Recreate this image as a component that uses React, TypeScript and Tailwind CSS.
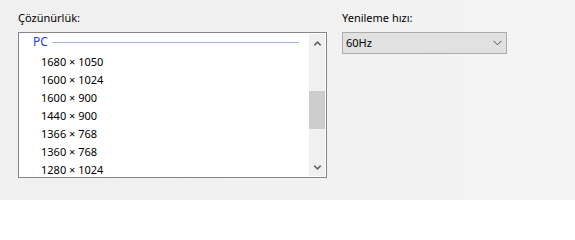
const resolutions = [
  "1680 × 1050",
  "1600 × 1024",
  "1600 × 900",
  "1440 × 900",
  "1366 × 768",
  "1360 × 768",
  "1280 × 1024",
];

function ArrowUp() {
  return (
    <svg width="9" height="6" viewBox="0 0 9 6" aria-hidden="true">
      <path d="M0.5 5 L4.5 1 L8.5 5 L7 5.8 L4.5 3.3 L2 5.8 Z" fill="#606060" />
    </svg>
  );
}

function ArrowDown() {
  return (
    <svg width="9" height="6" viewBox="0 0 9 6" aria-hidden="true">
      <path d="M0.5 1 L4.5 5 L8.5 1 L7 0.2 L4.5 2.7 L2 0.2 Z" fill="#606060" />
    </svg>
  );
}

export default function App() {
  return (
    <div
      className="w-[575px] h-[200px] bg-gradient-to-r from-[#f0f0f0] via-[#f1f1f1] to-[#f4f4f4] text-[11px] text-black flex gap-[15px] pl-[18px] pt-[10px]"
      style={{ fontFamily: '"Noto Sans", sans-serif' }}
    >
      {/* resolution list */}
      <div className="flex flex-col">
        <div className="h-[16px] leading-[16px]">Çözünürlük:</div>
        <div className="mt-[6px] w-[309px] h-[146px] border border-[#828790] bg-white p-px flex overflow-hidden">
          <div className="flex-1 flex flex-col overflow-hidden">
            <div className="h-[19px] shrink-0 flex items-center pl-[13px] pr-[10px] pb-[3px] gap-[4px]">
              <span className="text-[#1f40d0] text-[12px] leading-none">PC</span>
              <span className="flex-1 h-px bg-[#a8b8dc]" />
            </div>
            {resolutions.map((r) => (
              <div key={r} className="h-[18px] shrink-0 leading-[18px] pl-[21px]">
                {r}
              </div>
            ))}
          </div>
          <div className="w-[16px] shrink-0 bg-[#f0f0f0] flex flex-col">
            <div className="h-[17px] shrink-0 flex items-center justify-center">
              <ArrowUp />
            </div>
            <div className="flex-1 flex flex-col">
              <div className="h-[40px]" />
              <div className="h-[38px] bg-[#cdcdcd]" />
            </div>
            <div className="h-[17px] shrink-0 flex items-center justify-center">
              <ArrowDown />
            </div>
          </div>
        </div>
      </div>

      {/* refresh rate */}
      <div className="flex flex-col">
        <div className="h-[16px] leading-[16px]">Yenileme hızı:</div>
        <div className="mt-[6px] w-[165px] h-[22px] border border-[#adadad] bg-[#e1e1e1] flex items-center justify-between pl-[3px] pr-[4px]">
          <span>60Hz</span>
          <svg width="9" height="6" viewBox="0 0 9 6" aria-hidden="true">
            <path d="M0.5 0.8 L4.5 4.8 L8.5 0.8" fill="none" stroke="#505050" strokeWidth="1" />
          </svg>
        </div>
      </div>
    </div>
  );
}
